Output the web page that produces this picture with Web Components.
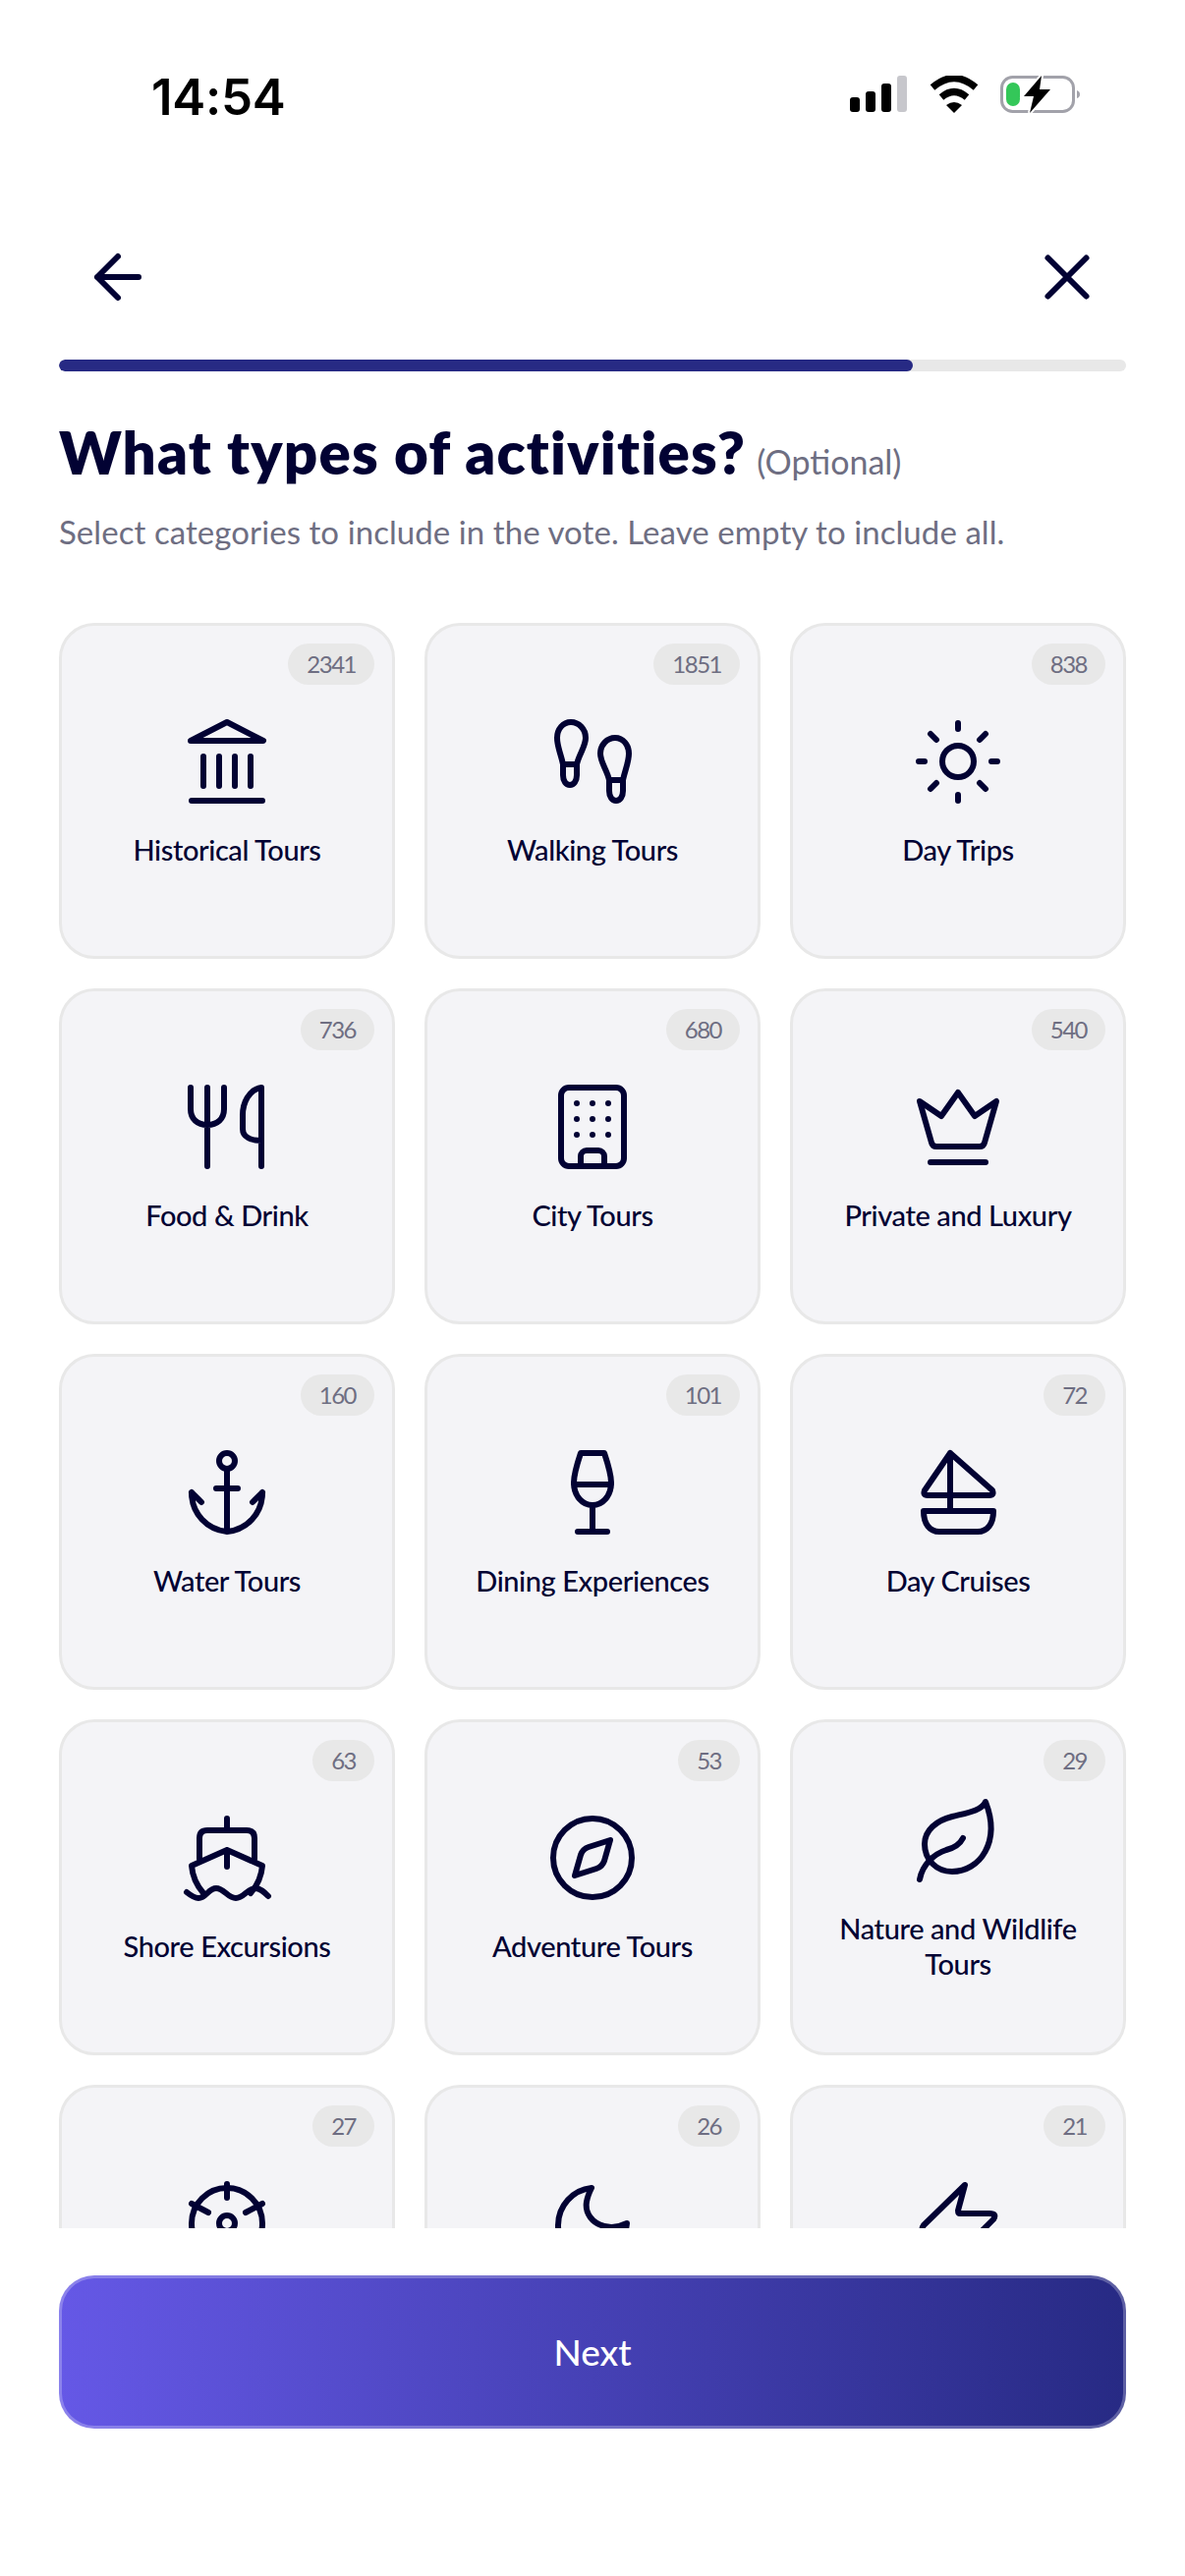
<!DOCTYPE html>
<html lang="en"><head><meta charset="utf-8"><title>Activities</title>
<style>html,body{margin:0;padding:0;background:#fff}body{width:1206px;height:2622px;overflow:hidden;font-family:"Lato","Liberation Sans",sans-serif;color:#020233}</style>
</head><body>
<app-screen>
  <status-bar slot="status" time="14:54"></status-bar>
  <nav-bar slot="nav"></nav-bar>
  <progress-bar slot="progress" value="80"></progress-bar>
  <page-heading slot="heading" note="(Optional)" sub="Select categories to include in the vote. Leave empty to include all.">What types of activities?</page-heading>
  <category-card count="2341" icon="temple">Historical Tours</category-card>
  <category-card count="1851" icon="steps">Walking Tours</category-card>
  <category-card count="838" icon="sun">Day Trips</category-card>
  <category-card count="736" icon="food">Food &amp; Drink</category-card>
  <category-card count="680" icon="building">City Tours</category-card>
  <category-card count="540" icon="crown">Private and Luxury</category-card>
  <category-card count="160" icon="anchor">Water Tours</category-card>
  <category-card count="101" icon="glass">Dining Experiences</category-card>
  <category-card count="72" icon="sail">Day Cruises</category-card>
  <category-card count="63" icon="ship">Shore Excursions</category-card>
  <category-card count="53" icon="compass">Adventure Tours</category-card>
  <category-card count="29" icon="leaf">Nature and Wildlife Tours</category-card>
  <category-card count="27" icon="target"></category-card>
  <category-card count="26" icon="moon"></category-card>
  <category-card count="21" icon="bolt"></category-card>
  <cta-button slot="footer">Next</cta-button>
</app-screen>
<script>
const ICONS={
temple:'<path d="M11 27 48 8l37 19Z"/><path d="M24 43v30M40 43v30M56 43v30M72 43v30M12 88h72"/>',
steps:'<path d="M26 8C18 8 12 15 12 24c0 9 4 17 6 27v11c0 6 3 10 7 10s7-4 7-10V51c2-10 9-18 9-27C41 15 34 8 26 8ZM18 51h14"/><path d="M71 24c8 0 14 7 14 16 0 9-4 17-6 27v11c0 6-3 10-7 10s-7-4-7-10V67c-2-10-9-18-9-27 0-9 7-16 15-16ZM79 67H65"/>',
sun:'<circle cx="48" cy="48" r="16"/><path d="M48 9v6M48 82v6M8 48h6M82 48h6M20 20l6 6M70 70l6 6M76 20l-6 6M26 70l-6 6"/>',
food:'<path d="M11 8v22c0 10 7 16 17 16s17-6 17-16V8M28 8v80M83 88V8C70 10 64 24 64 36v14c0 8 8 12 19 12"/>',
building:'<rect x="16" y="8" width="64" height="80" rx="8"/><path d="M36 88V78a6 6 0 0 1 6-6h12a6 6 0 0 1 6 6v10"/><g fill="#020233" stroke="none"><circle cx="32" cy="24" r="3"/><circle cx="48" cy="24" r="3"/><circle cx="64" cy="24" r="3"/><circle cx="32" cy="40" r="3"/><circle cx="48" cy="40" r="3"/><circle cx="64" cy="40" r="3"/><circle cx="32" cy="56" r="3"/><circle cx="48" cy="56" r="3"/><circle cx="64" cy="56" r="3"/></g>',
crown:'<path d="M9 22 31 37 48 13l17 24 22-15-12 42q-1 4-5 4H26q-4 0-5-4ZM20 84h56"/>',
anchor:'<circle cx="48" cy="16" r="8"/><path d="M48 24v64M37 44h22M12 48C12 70 28 86 48 88 68 86 84 70 84 48M12 48l10 10M84 48 74 58"/>',
glass:'<path d="M36 8h24c4 12 7 22 7 30 0 14-9 23-19 23S29 52 29 38c0-8 3-18 7-30ZM29 40h38M48 61v27M33 88h30"/>',
sail:'<path d="M40 8 14 46q-2 5 3 5h63q5 0 3-5ZM40 8v59M13 67h71c0 13-6 21-16 21H29C19 88 13 80 13 67Z"/>',
ship:'<path d="M48 8v11M20 49V28q0-8 8-8h40q8 0 8 8v21M48 40v17M48 40 12 56c1 12 5 20 12 28M48 40l36 16c-1 12-5 20-12 28M7 83c5 4 8 6 12 6 8 0 10-10 18-10s12 10 20 10 12-10 20-10c5 0 9 4 13 8"/>',
compass:'<circle cx="48" cy="48" r="40"/><path d="M66 30 44 37q-6 2-8 8l-6 21 22-7q6-2 8-8Z"/>',
leaf:'<path d="M76 9C72 18 58 20 42 24 26 28 14 38 14 52c0 16 12 28 28 28C70 80 92 50 76 9Z"/><path d="M9 88c3-16 15-26 27-30 8-2 14-6 17-12"/>',
target:'<circle cx="48" cy="48" r="36"/><circle cx="48" cy="48" r="8"/><path d="M48 8v14M12 28l17 9M84 28l-17 9M48 74v14"/>',
moon:'<path d="M47 12C28 14 13 30 13 50c0 22 17 38 37 38 17 0 30-16 33-40-8 4-15 5-23 3C48 48 40 38 42 26c1-6 3-10 5-14Z"/>',
bolt:'<path d="M55 9 13 50q-4 6 3 6h24v32l44-44q4-6-4-6H50q-2 0-2-3Z"/>'
};
function def(name,css,html){customElements.define(name,class extends HTMLElement{connectedCallback(){if(this.shadowRoot)return;const r=this.attachShadow({mode:'open'});r.innerHTML='<style>'+css+'</style>'+(typeof html==='function'?html(this):html);}});}

def('app-screen',`:host{display:flex;flex-direction:column;width:1206px;height:2622px;box-sizing:border-box}
.grid{flex:1;min-height:0;overflow:hidden;display:grid;grid-template-columns:repeat(3,342px);grid-auto-rows:342px;gap:30px;padding:0 60px;align-content:start}
.foot{padding:48px 60px 150px}`,
`<slot name="status"></slot><slot name="nav"></slot><slot name="progress"></slot><slot name="heading"></slot><div class="grid"><slot></slot></div><div class="foot"><slot name="footer"></slot></div>`);

def('status-bar',`:host{display:flex;height:198px;box-sizing:border-box;padding:74px 107px 0 154px;justify-content:space-between;align-items:flex-start}
.t{font:600 51px/50px Inter,"Liberation Sans",sans-serif;color:#000;letter-spacing:-.3px}
.r{display:flex;align-items:flex-start;padding-top:3px}svg{display:block}`,
h=>`<div class="t">${h.getAttribute('time')}</div><div class="r">
<svg width="58" height="39" viewBox="0 0 58 39" aria-hidden="true" style="margin-right:23px"><rect x="0" y="22" width="10" height="15" rx="3"/><rect x="16" y="16" width="10" height="21" rx="3"/><rect x="32" y="8" width="10" height="29" rx="3"/><rect x="48" y="0" width="10" height="37" rx="3" fill="#c7c7cc"/></svg>
<svg width="50" height="39" viewBox="0 0 50 39" aria-hidden="true" style="margin-right:22px"><path d="M3 12Q25-7 47 12" fill="none" stroke="#000" stroke-width="7"/><path d="M12 22Q25 11 38 22" fill="none" stroke="#000" stroke-width="7"/><path d="M17 30Q25 24 33 30L25 38Z"/></svg>
<svg width="81" height="42" viewBox="0 0 81 42" aria-hidden="true" style="margin-top:-2px"><rect x="1.5" y="3.5" width="73" height="35" rx="11" fill="none" stroke="#a2a2aa" stroke-width="3"/><rect x="6" y="9" width="14" height="24" rx="7" fill="#34c759"/><path d="M78 17q3 1 3 4t-3 4Z" fill="#a2a2aa"/><path d="M42 2 24 23h10l-4 17 21-24H40Z" stroke="#fff" stroke-width="4" fill="#fff"/><path d="M42 2 24 23h10l-4 17 21-24H40Z"/></svg></div>`);

def('nav-bar',`:host{display:flex;height:168px;align-items:center;justify-content:space-between;padding:0 84px}svg{display:block;fill:none;stroke:#020233;stroke-width:6;stroke-linecap:round;stroke-linejoin:round}`,
`<svg width="72" height="72" viewBox="0 0 72 72" role="img" aria-label="Back"><path d="M15 36h42M36 15 15 36l21 21"/></svg>
<svg width="72" height="72" viewBox="0 0 72 72" role="img" aria-label="Close"><path d="M16.500 16.500l39 39M55.500 16.500l-39 39"/></svg>`);

def('progress-bar',`:host{display:block;height:12px;margin:0 60px;background:#e8e8e8;border-radius:6px;overflow:hidden}.f{height:100%;background:#272a84;border-radius:6px}`,
h=>`<div class="f" style="width:${h.getAttribute('value')}%"></div>`);

def('page-heading',`:host{display:block;padding:46px 60px 69px}
.row{display:flex;align-items:baseline;gap:11px;height:72px}
h1{margin:0;font:800 60px/72px Lato,"Liberation Sans",sans-serif;letter-spacing:1.2px;color:#020233}
.n{font:400 34px/72px Lato,sans-serif;color:#6e6e82}
p{margin:21px 0 0;font:400 33px/48px Lato,sans-serif;letter-spacing:.07px;color:#6e6e82}`,
h=>`<div class="row"><h1><slot></slot></h1><span class="n">${h.getAttribute('note')}</span></div><p>${h.getAttribute('sub')}</p>`);

def('category-card',`:host{display:flex;position:relative;flex-direction:column;align-items:center;justify-content:center;gap:24px;box-sizing:border-box;width:342px;height:342px;padding:0 18px;background:#f4f4f7;border:3px solid #e8e8e8;border-radius:36px;font:500 29px/36px Lato,sans-serif;letter-spacing:-.4px;color:#020233;text-align:center}
.b{position:absolute;top:18px;right:18px;height:42px;padding:0 19px;border-radius:21px;background:#e8e8e8;color:#6e6e82;font:400 24px/42px Lato,sans-serif;letter-spacing:-1.5px}
.l{min-height:36px}
svg{display:block;flex:none;fill:none;stroke:#020233;stroke-width:6;stroke-linecap:round;stroke-linejoin:round}`,
h=>`<span class="b">${h.getAttribute('count')}</span><svg width="96" height="96" viewBox="0 0 96 96" aria-hidden="true">${ICONS[h.getAttribute('icon')]||''}</svg><div class="l"><slot></slot></div>`);

def('cta-button',`:host{display:flex;align-items:center;justify-content:center;height:156px;box-sizing:border-box;border:3px solid rgba(255,255,255,.25);border-radius:36px;background:linear-gradient(90deg,#6558e6 0%,#272a84 100%);background-origin:border-box;color:#fff;font:500 37px/48px Lato,sans-serif}`,`<slot></slot>`);
</script>
</body></html>
